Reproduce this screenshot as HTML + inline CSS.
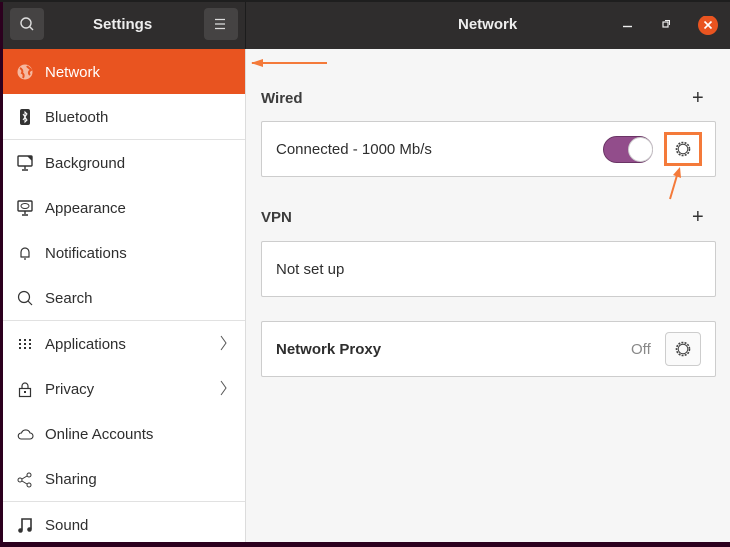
<!DOCTYPE html>
<html><head><style>
*{margin:0;padding:0;box-sizing:border-box}
body{width:730px;height:542px;overflow:hidden;background:#2c001e;font-family:"Liberation Sans","DejaVu Sans",sans-serif;position:relative}
.top{position:absolute;left:0;top:0;width:730px;height:2px;background:#1e1e1e}
.hdr{position:absolute;left:3px;top:2px;width:727px;height:47px;background:#2f2d2d}
.hsep{position:absolute;left:245px;top:2px;width:1px;height:47px;background:#1c1c1c}
.btn{position:absolute;top:8px;width:34px;height:32px;background:#454343;border-radius:4px}
.ttl{position:absolute;color:#eee;font-weight:bold;font-size:15px;top:16px}
.side{position:absolute;left:3px;top:49px;width:242px;height:493px;background:#fff}
.vsep{position:absolute;left:245px;top:49px;width:1px;height:493px;background:#dcdcdc}
.main{position:absolute;left:246px;top:49px;width:484px;height:493px;background:#f6f6f6}
.row{position:absolute;left:0;width:242px;height:45px;font-size:15px;color:#2e2e2e}
.row span{position:absolute;left:42px;top:15px}
.row svg{position:absolute;left:14px;top:15px}
.sel{background:#e95420;color:#fff}
.hl{position:absolute;left:0;width:242px;height:1px;background:#e1e1e1}
.row svg.chev{left:216px;top:14px}
.card{position:absolute;left:261px;width:455px;background:#fff;border:1px solid #cdcdcd;border-radius:2px}
.lbl{position:absolute;font-size:15px;color:#2e2e2e}
.h{position:absolute;font-size:15px;font-weight:bold;color:#3c3c3c}
</style></head><body>
<div class="top"></div>
<div class="hdr"></div>
<div class="hsep"></div>
<div class="btn" style="left:10px"><svg width="34" height="32"><circle cx="16" cy="15" r="5" fill="none" stroke="#ddd" stroke-width="1.4"/><line x1="19.5" y1="18.5" x2="23" y2="22" stroke="#ddd" stroke-width="1.4"/></svg></div>
<div class="ttl" style="left:93px">Settings</div>
<div class="btn" style="left:204px"><svg width="34" height="32"><path d="M11 11.5h10M11 16h10M11 20.5h10" stroke="#ddd" stroke-width="1.3"/></svg></div>
<div class="ttl" style="left:458px">Network</div>
<svg style="position:absolute;left:618px;top:16px" width="110" height="20"><line x1="5" y1="10.5" x2="14" y2="10.5" stroke="#eee" stroke-width="1.4"/><rect x="45" y="6" width="5" height="5" fill="none" stroke="#eee" stroke-width="1.2"/><path d="M47 4.5h4.5v4.5" fill="none" stroke="#eee" stroke-width="1"/><circle cx="90" cy="9" r="10" fill="#e95420"/><path d="M86.5 5.5l7 7M93.5 5.5l-7 7" stroke="#fff" stroke-width="1.6"/></svg>
<div class="side">
<div class="row sel" style="top:0;color:#fff"><svg width="18" height="18"><circle cx="8" cy="8" r="7.5" fill="#f5b8a0"/><path d="M3 4c2 1 3 3 2 5 2 1 2 3 1 5M10 2c1 2 3 2 4 4-2 1-3 3-1 5" fill="none" stroke="#e95420" stroke-width="2"/></svg><span>Network</span></div>
<div class="row" style="top:45px"><svg width="18" height="18"><rect x="3" y="0" width="10" height="16" rx="2" fill="#333"/><path d="M6 5l4 6-2 2V3l2 2-4 6" fill="none" stroke="#fff" stroke-width="1"/></svg><span>Bluetooth</span></div>
<div class="hl" style="top:90px"></div>
<div class="row" style="top:91px"><svg width="18" height="18"><rect x="1" y="1" width="14" height="10" rx="1" fill="none" stroke="#333" stroke-width="1.4"/><path d="M10 1h5v5z" fill="#333"/><path d="M8 11v3M5 15h6" stroke="#333" stroke-width="1.4"/></svg><span>Background</span></div>
<div class="row" style="top:136px"><svg width="18" height="18"><rect x="1" y="1" width="14" height="10" rx="1" fill="none" stroke="#333" stroke-width="1.4"/><ellipse cx="8" cy="6" rx="4" ry="2.5" fill="none" stroke="#333"/><path d="M8 11v3M5 15h6" stroke="#333" stroke-width="1.4"/></svg><span>Appearance</span></div>
<div class="row" style="top:181px"><svg width="18" height="18"><path d="M4 12V7a4 4 0 0 1 8 0v5H3.5h9M7 14h2" fill="none" stroke="#333" stroke-width="1.2"/></svg><span>Notifications</span></div>
<div class="row" style="top:226px"><svg width="18" height="18"><circle cx="7" cy="7" r="5.5" fill="none" stroke="#333" stroke-width="1.2"/><line x1="11" y1="11" x2="15" y2="15" stroke="#333" stroke-width="1.2"/></svg><span>Search</span></div>
<div class="hl" style="top:271px"></div>
<div class="row" style="top:272px"><svg width="18" height="18" fill="#333"><rect x="2" y="3" width="2" height="2"/><rect x="7" y="3" width="2" height="2"/><rect x="12" y="3" width="2" height="2"/><rect x="2" y="7" width="2" height="2"/><rect x="7" y="7" width="2" height="2"/><rect x="12" y="7" width="2" height="2"/><rect x="2" y="11" width="2" height="2"/><rect x="7" y="11" width="2" height="2"/><rect x="12" y="11" width="2" height="2"/></svg><span>Applications</span><svg class="chev" width="10" height="18"><path d="M2 1l5 7-5 7" fill="none" stroke="#555" stroke-width="1"/></svg></div>
<div class="row" style="top:317px"><svg width="18" height="18"><rect x="2.5" y="7.5" width="11" height="8" fill="none" stroke="#333" stroke-width="1.2"/><path d="M5 7.5V5a3 3 0 0 1 6 0v2.5" fill="none" stroke="#333" stroke-width="1.2"/><rect x="7" y="10" width="2" height="2" fill="#333"/></svg><span>Privacy</span><svg class="chev" width="10" height="18"><path d="M2 1l5 7-5 7" fill="none" stroke="#555" stroke-width="1"/></svg></div>
<div class="row" style="top:362px"><svg width="18" height="18"><path d="M4 13h9a3 3 0 0 0 0-6 4.5 4.5 0 0 0-8.5 0A3 3 0 0 0 4 13z" fill="none" stroke="#333" stroke-width="1.1"/></svg><span>Online Accounts</span></div>
<div class="row" style="top:407px"><svg width="18" height="18"><circle cx="3" cy="9" r="2" fill="none" stroke="#333"/><circle cx="12" cy="4" r="2" fill="none" stroke="#333"/><circle cx="12" cy="14" r="2" fill="none" stroke="#333"/><path d="M5 8l5-3M5 10l5 3" stroke="#333"/></svg><span>Sharing</span></div>
<div class="hl" style="top:452px"></div>
<div class="row" style="top:453px"><svg width="18" height="18"><path d="M5 13V2h9v10" fill="none" stroke="#333" stroke-width="1.6"/><circle cx="3.5" cy="13.5" r="2.3" fill="#333"/><circle cx="12.5" cy="12.5" r="2.3" fill="#333"/></svg><span>Sound</span></div>
</div>
<div class="vsep"></div>
<div class="main"></div>
<svg style="position:absolute;left:249px;top:55px" width="82" height="16"><path d="M3 8H78" stroke="#f47a3a" stroke-width="2"/><path d="M2 8l12-4v8z" fill="#f47a3a"/></svg>
<div class="h" style="left:261px;top:90px">Wired</div>
<div class="lbl" style="left:692px;top:87px;font-size:20px;color:#333">+</div>
<div class="card" style="top:121px;height:56px"></div>
<div class="lbl" style="left:276px;top:141px">Connected - 1000 Mb/s</div>
<div style="position:absolute;left:603px;top:136px;width:50px;height:27px;border-radius:14px;background:#924d8b;border:1px solid #6a3465"></div>
<div style="position:absolute;left:628px;top:137px;width:25px;height:25px;border-radius:50%;background:#fff;border:1px solid #ccc"></div>
<div style="position:absolute;left:664px;top:132px;width:38px;height:34px;border:3px solid #f47a3a"></div>
<svg style="position:absolute;left:673px;top:140px" width="20" height="18"><circle cx="10" cy="9" r="6.5" fill="none" stroke="#444" stroke-width="1.6" stroke-dasharray="2 1.2"/><circle cx="10" cy="9" r="4.8" fill="none" stroke="#444" stroke-width="1"/></svg>
<svg style="position:absolute;left:665px;top:166px" width="20" height="34"><path d="M5 33L13 6" stroke="#f47a3a" stroke-width="2"/><path d="M15 1l1 11-8-3z" fill="#f47a3a"/></svg>
<div class="h" style="left:261px;top:209px">VPN</div>
<div class="lbl" style="left:692px;top:206px;font-size:20px;color:#333">+</div>
<div class="card" style="top:241px;height:56px"></div>
<div class="lbl" style="left:276px;top:261px">Not set up</div>
<div class="card" style="top:321px;height:56px"></div>
<div class="lbl" style="left:276px;top:341px;font-weight:bold">Network Proxy</div>
<div class="lbl" style="left:631px;top:341px;color:#888">Off</div>
<div style="position:absolute;left:665px;top:332px;width:36px;height:34px;border:1px solid #cdcdcd;border-radius:4px;background:#fafafa"></div>
<svg style="position:absolute;left:673px;top:340px" width="20" height="18"><circle cx="10" cy="9" r="6.5" fill="none" stroke="#444" stroke-width="1.6" stroke-dasharray="2 1.2"/><circle cx="10" cy="9" r="4.8" fill="none" stroke="#444" stroke-width="1"/></svg>
</body></html>
